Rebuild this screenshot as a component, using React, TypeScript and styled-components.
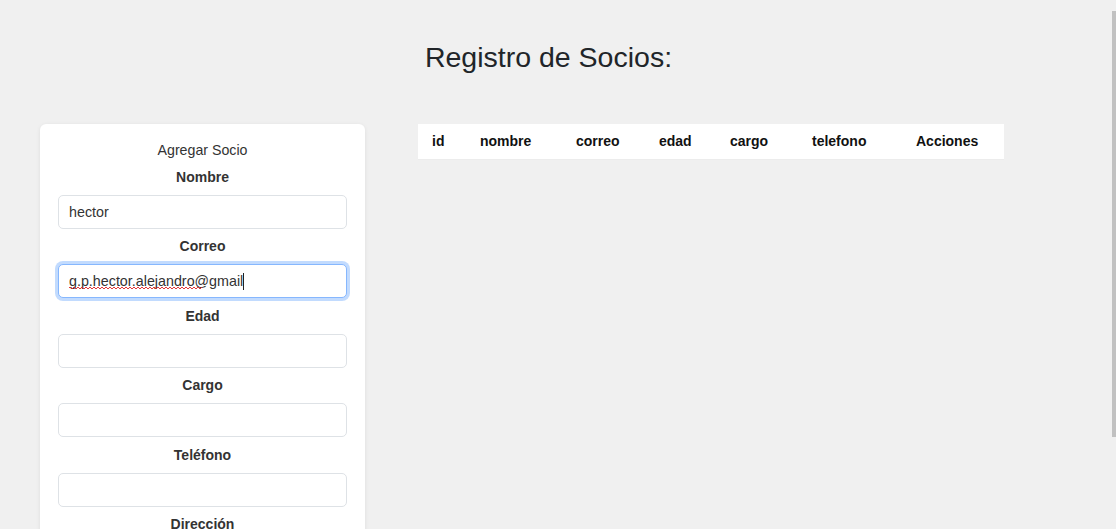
import { useEffect, useRef, useState } from "react";
import styled, { createGlobalStyle, css } from "styled-components";

const GlobalStyle = createGlobalStyle`
    html, body {
        margin: 0;
        padding: 0;
        background: #f0f0f0;
        overflow: hidden;
    }
    body {
        font-family: "Liberation Sans", Arial, sans-serif;
        color: #212529;
    }
    * {
        box-sizing: border-box;
    }
`;

const Page = styled.div`
    min-height: 660px;
`;

const Titulo = styled.h1`
    margin: 0;
    padding: 41px 19px 0 0;
    font-size: 28.5px;
    line-height: 32px;
    font-weight: 400;
    text-align: center;
    color: #212529;
`;

const Contenido = styled.main`
    display: flex;
    align-items: flex-start;
    gap: 53px;
    padding: 51px 0 0 40px;
`;

const Tarjeta = styled.section`
    width: 325px;
    padding: 17px 18px 24px;
    background: #fff;
    border-radius: 6px;
    box-shadow: 0 1px 4px rgba(0, 0, 0, 0.08);
    display: flex;
    flex-direction: column;
    gap: 9.5px;
`;

const TarjetaTitulo = styled.h2`
    margin: 0;
    font-size: 14.2px;
    line-height: 18px;
    font-weight: 400;
    text-align: center;
    color: #333;
`;

const Campo = styled.div`
    display: flex;
    flex-direction: column;
    gap: 9px;
`;

const Etiqueta = styled.label`
    font-size: 14px;
    line-height: 17px;
    font-weight: 700;
    text-align: center;
    color: #333;
`;

const CajaEntrada = styled.div`
    position: relative;
`;

const Entrada = styled.input<{ $activa?: boolean }>`
    display: block;
    width: 100%;
    height: 34px;
    padding: 0 10px;
    font-family: "Liberation Sans", Arial, sans-serif;
    font-size: 14.3px;
    color: #333;
    background: #fff;
    border: 1px solid #dee2e6;
    border-radius: 5px;
    outline: none;
    caret-color: #333;

    ${({ $activa }) =>
        $activa &&
        css`
            border-color: #86b7fe;
            box-shadow: 0 0 0 3px rgba(13, 110, 253, 0.25);
        `}
`;

// subrayado ondulado del corrector ortográfico
const Ondulado = styled.svg`
    position: absolute;
    left: 11px;
    top: 22px;
    pointer-events: none;
`;

const Cursor = styled.span`
    position: absolute;
    left: 185px;
    top: 9px;
    width: 1px;
    height: 17px;
    background: #222;
    pointer-events: none;
`;

const Tabla = styled.table`
    width: 586px;
    border-collapse: collapse;
    background: #fff;
    table-layout: fixed;
`;

const Celda = styled.th<{ $ancho: number }>`
    width: ${({ $ancho }) => $ancho}px;
    height: 35px;
    padding: 0 0 0 14px;
    font-size: 14px;
    font-weight: 700;
    text-align: left;
    color: #111;
    border-bottom: 1px solid #ececec;
`;

const BarraDesplazamiento = styled.div`
    position: fixed;
    top: 11px;
    right: 0;
    width: 4px;
    height: 426px;
    background: #c1c1c1;
`;

const columnas = [
    { nombre: "id", ancho: 48 },
    { nombre: "nombre", ancho: 96 },
    { nombre: "correo", ancho: 83 },
    { nombre: "edad", ancho: 71 },
    { nombre: "cargo", ancho: 82 },
    { nombre: "telefono", ancho: 104 },
    { nombre: "Acciones", ancho: 102 },
];

const campos = [
    { id: "nombre", etiqueta: "Nombre" },
    { id: "correo", etiqueta: "Correo" },
    { id: "edad", etiqueta: "Edad" },
    { id: "cargo", etiqueta: "Cargo" },
    { id: "telefono", etiqueta: "Teléfono" },
    { id: "direccion", etiqueta: "Dirección" },
];

const ondas = (ancho: number) => {
    let d = "M0 2";
    for (let x = 0; x < ancho; x += 4) {
        d += ` Q${x + 1} 0 ${x + 2} 2 T${x + 4} 2`;
    }
    return d;
};

const App = () => {
    const [valores, setValores] = useState<Record<string, string>>({
        nombre: "hector",
        correo: "g.p.hector.alejandro@gmail",
    });
    const [enfocado, setEnfocado] = useState(false);
    const correoRef = useRef<HTMLInputElement>(null);

    useEffect(() => {
        const el = correoRef.current;
        if (el) {
            el.focus();
            el.setSelectionRange(el.value.length, el.value.length);
        }
    }, []);

    return (
        <Page>
            <GlobalStyle />
            <Titulo>Registro de Socios:</Titulo>
            <Contenido>
                <Tarjeta>
                    <TarjetaTitulo>Agregar Socio</TarjetaTitulo>
                    {campos.map((campo) => (
                        <Campo key={campo.id}>
                            <Etiqueta htmlFor={campo.id}>{campo.etiqueta}</Etiqueta>
                            <CajaEntrada>
                                <Entrada
                                    id={campo.id}
                                    ref={campo.id === "correo" ? correoRef : undefined}
                                    $activa={campo.id === "correo"}
                                    spellCheck={false}
                                    value={valores[campo.id] ?? ""}
                                    onChange={(e) => setValores({ ...valores, [campo.id]: e.target.value })}
                                    onKeyDown={() => campo.id === "correo" && setEnfocado(true)}
                                />
                                {campo.id === "correo" && (
                                    <>
                                        <Ondulado width="133" height="4" viewBox="0 0 133 4">
                                            <path d={ondas(133)} fill="none" stroke="#e02020" strokeWidth="0.9" />
                                        </Ondulado>
                                        {!enfocado && <Cursor />}
                                    </>
                                )}
                            </CajaEntrada>
                        </Campo>
                    ))}
                </Tarjeta>
                <Tabla>
                    <thead>
                        <tr>
                            {columnas.map((c) => (
                                <Celda key={c.nombre} $ancho={c.ancho}>
                                    {c.nombre}
                                </Celda>
                            ))}
                        </tr>
                    </thead>
                    <tbody />
                </Tabla>
            </Contenido>
            <BarraDesplazamiento />
        </Page>
    );
};

export default App;
